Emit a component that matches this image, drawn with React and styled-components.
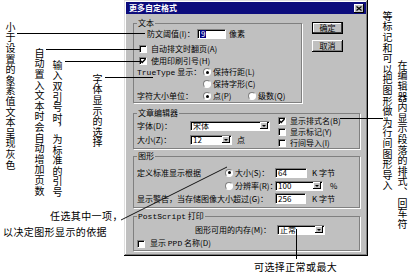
import styled, { createGlobalStyle } from "styled-components";

const GlobalStyle = createGlobalStyle`
  html, body {
    margin: 0;
    padding: 0;
    background: #fff;
  }
  body {
    font-family: "Noto Sans CJK SC", "Noto Sans", sans-serif;
  }
`;

/* ---------- page & callouts ---------- */

const Page = styled.div`
  position: relative;
  width: 410px;
  height: 275px;
  box-sizing: border-box;
  padding-left: 124px;
  overflow: hidden;
  background: #fff;
`;

const VNote = styled.div`
  position: absolute;
  left: ${(p) => p.$x}px;
  top: ${(p) => p.$y}px;
  writing-mode: vertical-rl;
  font-size: 10px;
  line-height: 11px;
  letter-spacing: 0.6px;
  color: #000;
  white-space: nowrap;
`;

const HNote = styled.div`
  position: absolute;
  left: ${(p) => p.$x}px;
  top: ${(p) => p.$y}px;
  font-size: 10px;
  line-height: 12px;
  letter-spacing: 0.4px;
  color: #000;
  white-space: nowrap;
`;

const Leaders = styled.svg`
  position: absolute;
  left: 0;
  top: 0;
  pointer-events: none;
`;

/* ---------- window chrome ---------- */

const Window = styled.div`
  width: 244px;
  height: 256px;
  box-sizing: border-box;
  padding: 2px;
  display: flex;
  flex-direction: column;
  background: #c0c0c0;
  box-shadow: inset -1px -1px #000, inset 1px 1px #dfdfdf,
    inset -2px -2px #808080, inset 2px 2px #fff;
  font-size: 8px;
  line-height: 8px;
  color: #000;
`;

const TitleBar = styled.div`
  flex: none;
  height: 12px;
  display: flex;
  align-items: center;
  justify-content: space-between;
  padding: 0 2px 0 3px;
  background: #0c0c7c;
  color: #fff;
  font-weight: bold;
`;

const CloseButton = styled.span`
  width: 10px;
  height: 9px;
  box-sizing: border-box;
  display: flex;
  align-items: center;
  justify-content: center;
  background: #c0c0c0;
  box-shadow: inset -1px -1px #000, inset 1px 1px #fff;
`;

const Body = styled.div`
  display: flex;
  flex-direction: column;
  padding: 5px 6px 0 7px;
`;

const TopRow = styled.div`
  display: flex;
  align-items: flex-start;
`;

const ButtonColumn = styled.div`
  display: flex;
  flex-direction: column;
  gap: 6px;
  margin: 3px 0 0 10px;
`;

const PushButton = styled.button`
  width: 31px;
  height: 12px;
  padding: 0;
  border: none;
  background: #c0c0c0;
  font: inherit;
  font-size: 8px;
  line-height: 8px;
  color: #000;
  box-shadow: ${(p) =>
    p.$default
      ? "inset 0 0 0 1px #000, inset -2px -2px #404040, inset 2px 2px #fff"
      : "inset -1px -1px #000, inset 1px 1px #fff, inset -2px -2px #808080"};
`;

/* ---------- group boxes ---------- */

const Group = styled.fieldset`
  width: ${(p) => p.$w}px;
  box-sizing: border-box;
  min-width: 0;
  margin: ${(p) => p.$mt || 0}px 0 0;
  padding: 0 3px ${(p) => p.$pb || 0}px;
  border: 1px solid #808080;
  box-shadow: 1px 1px 0 #fff;
`;

const Legend = styled.legend`
  padding: 0 1px;
  margin-left: 0;
  font-size: 8px;
  line-height: 8px;
`;

const Latin = styled.span`
  font-family: "Liberation Mono", monospace;
  font-size: 8px;
`;

const Row = styled.div`
  display: flex;
  align-items: center;
  height: ${(p) => p.$h || 12}px;
  margin-top: ${(p) => p.$mt || 0}px;
  padding-left: ${(p) => p.$indent || 0}px;
  white-space: nowrap;
`;

const Label = styled.span`
  flex: none;
  width: ${(p) => (p.$w ? `${p.$w}px` : "auto")};
  margin-left: ${(p) => p.$ml || 0}px;
`;

const Split = styled.div`
  display: flex;
`;

const LeftPane = styled.div`
  width: 141px;
  flex: none;
`;

const RightPane = styled.div`
  margin-top: -2px;
`;

/* ---------- controls ---------- */

const Box = styled.span`
  flex: none;
  width: 8px;
  height: 8px;
  box-sizing: border-box;
  display: flex;
  align-items: center;
  justify-content: center;
  margin: 0 ${(p) => p.$gap ?? 4}px 0 ${(p) => p.$ml || 0}px;
  background: #fff;
  border: 1px solid;
  border-color: #808080 #fff #fff #808080;
  box-shadow: inset 1px 1px #000;
`;

const Dot = styled.span`
  flex: none;
  width: 8px;
  height: 8px;
  box-sizing: border-box;
  display: flex;
  align-items: center;
  justify-content: center;
  margin-right: 2px;
  border-radius: 50%;
  background: #fff;
  border: 1px solid;
  border-color: #808080 #fff #fff #808080;

  &::after {
    content: "";
    display: ${(p) => (p.$on ? "block" : "none")};
    width: 3px;
    height: 3px;
    border-radius: 50%;
    background: #000;
  }
`;

const Field = styled.span`
  flex: none;
  width: ${(p) => p.$w}px;
  height: ${(p) => p.$h || 10}px;
  box-sizing: border-box;
  display: flex;
  align-items: center;
  justify-content: space-between;
  padding: 0 1px 0 2px;
  margin-left: ${(p) => p.$ml || 0}px;
  background: #fff;
  border: 1px solid;
  border-color: #808080 #fff #fff #808080;
  box-shadow: inset 1px 1px #000;
`;

const Selected = styled.span`
  background: #000080;
  color: #fff;
  padding: 0 1px;
`;

const DropButton = styled.span`
  flex: none;
  width: 8px;
  height: 7px;
  display: flex;
  align-items: center;
  justify-content: center;
  background: #c0c0c0;
  box-shadow: inset -1px -1px #000, inset 1px 1px #fff;

  &::after {
    content: "";
    border-left: 2px solid transparent;
    border-right: 2px solid transparent;
    border-top: 2px solid #000;
  }
`;

const Unit = styled.span`
  margin-left: ${(p) => p.$ml || 4}px;
`;

const Option = styled.span`
  display: flex;
  align-items: center;
  width: ${(p) => (p.$w ? `${p.$w}px` : "auto")};
`;

const Check = ({ on, ml, gap }) => (
  <Box $ml={ml} $gap={gap}>
    {on && (
      <svg width="6" height="6" viewBox="0 0 6 6" style={{ overflow: "visible" }}>
        <path d="M0.5 2.8 L2.2 4.5 L5.5 1" fill="none" stroke="#000" strokeWidth="1.3" />
      </svg>
    )}
  </Box>
);

const Combo = ({ w, h, ml, children }) => (
  <Field $w={w} $h={h} $ml={ml}>
    <span>{children}</span>
    <DropButton />
  </Field>
);

/* ---------- page ---------- */

const App = () => (
  <Page>
    <GlobalStyle />

    <Window>
      <TitleBar>
        <span>更多自定格式</span>
        <CloseButton>
          <svg width="6" height="5" viewBox="0 0 6 5">
            <path d="M0.5 0.5 L5.5 4.5 M5.5 0.5 L0.5 4.5" stroke="#000" strokeWidth="1.2" />
          </svg>
        </CloseButton>
      </TitleBar>

      <Body>
        <TopRow>
          <Group $w={169}>
            <Legend>文本</Legend>
            <Row $mt={1} $indent={10}>
              <Label $w={50}>防文阈值(I)：</Label>
              <Field $w={29}>
                <Selected>9</Selected>
              </Field>
              <Unit $ml={3}>像素</Unit>
            </Row>
            <Row $mt={3}>
              <Check ml={2} />
              <span>自动排文时翻页(A)</span>
            </Row>
            <Row $h={11}>
              <Check ml={2} on />
              <span>使用印刷引号(H)</span>
            </Row>
            <Row>
              <Label $w={66}>
                <Latin>TrueType</Latin> 显示：
              </Label>
              <Dot $on />
              <span>保持行距(L)</span>
            </Row>
            <Row $indent={66}>
              <Dot />
              <span>保持字形(C)</span>
            </Row>
            <Row>
              <Label $w={66}>字符大小单位：</Label>
              <Option $w={45}>
                <Dot $on />
                点(P)
              </Option>
              <Option>
                <Dot />
                级数(Q)
              </Option>
            </Row>
          </Group>

          <ButtonColumn>
            <PushButton $default>确定</PushButton>
            <PushButton>取消</PushButton>
          </ButtonColumn>
        </TopRow>

        <Group $w={227} $mt={6}>
          <Legend>文章编辑器</Legend>
          <Split>
            <LeftPane>
              <Row $mt={3} $h={11}>
                <Label $w={53}>字体(D)：</Label>
                <Combo w={80}>宋体</Combo>
              </Row>
              <Row $mt={3} $h={11}>
                <Label $w={53}>大小(Z)：</Label>
                <Combo w={42}>12</Combo>
                <Unit $ml={5}>点</Unit>
              </Row>
            </LeftPane>
            <RightPane>
              <Row $h={11}>
                <Check on />
                <span>显示排式名(B)</span>
              </Row>
              <Row $h={11}>
                <Check />
                <span>显示标记(Y)</span>
              </Row>
              <Row $h={11}>
                <Check />
                <span>行间导入(I)</span>
              </Row>
            </RightPane>
          </Split>
        </Group>

        <Group $w={227} $mt={3} $pb={2}>
          <Legend>图形</Legend>
          <Row $mt={6} $h={13}>
            <Label $w={88}>定义标准显示根据</Label>
            <Dot $on />
            <Label $w={40}>大小(S)：</Label>
            <Field $w={32}>64</Field>
            <Unit $ml={5}>K 字节</Unit>
          </Row>
          <Row $h={13} $indent={88}>
            <Dot />
            <Label $w={40}>分辨率(R)：</Label>
            <Combo w={48}>100</Combo>
            <Unit $ml={7}>%</Unit>
          </Row>
          <Row $h={13}>
            <Label $w={138}>显示警告，当存储图像大小超过(G)：</Label>
            <Field $w={31} $h={11}>256</Field>
            <Unit $ml={6}>K 字节</Unit>
          </Row>
        </Group>

        <Group $w={227} $mt={4}>
          <Legend>
            <Latin>PostScript</Latin> 打印
          </Legend>
          <Row $mt={2} $h={13} $indent={58}>
            <Label $w={82}>图形可用的内存(M)：</Label>
            <Combo w={48}>正常</Combo>
          </Row>
          <Row $mt={1} $h={13}>
            <Check gap={5} />
            <span>
              显示 <Latin>PPD</Latin> 名称(D)
            </span>
          </Row>
        </Group>
      </Body>
    </Window>

    <VNote $x={5} $y={22}>小于设置的象素值文本呈现灰色</VNote>
    <VNote $x={34} $y={48}>自动置入文本时会自动增加页数</VNote>
    <VNote $x={52} $y={60}>输入双引号时，为标准的引号</VNote>
    <VNote $x={92} $y={74}>字体显示的选择</VNote>
    <VNote $x={397} $y={60}>在编辑器内显示段落的排式、回车符</VNote>
    <VNote $x={382} $y={11}>等标记和可以把图形做为行间图形导入</VNote>

    <HNote $x={50} $y={210}>任选其中一项，</HNote>
    <HNote $x={3} $y={226}>以决定图形显示的依据</HNote>
    <HNote $x={254} $y={261}>可选择正常或最大</HNote>

    <Leaders width="410" height="275" viewBox="0 0 410 275">
      <g stroke="#000" strokeWidth="1" fill="none" shapeRendering="crispEdges">
        <path d="M17 33.5 H145" />
        <path d="M46 49.5 H141" />
        <path d="M65 61.5 H141" />
        <path d="M105 77.5 H153" />
        <path d="M340 118.5 H383" />
        <path d="M296.5 229 V259" />
      </g>
      <path d="M121 220 L227 167" stroke="#000" strokeWidth="0.9" fill="none" />
    </Leaders>
  </Page>
);

export default App;
